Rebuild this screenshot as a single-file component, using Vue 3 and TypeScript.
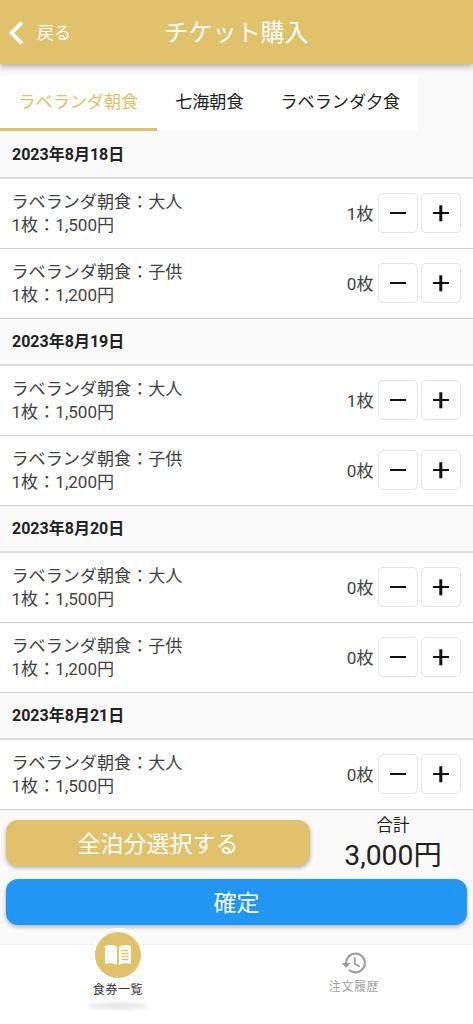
<script setup lang="ts">
interface Item { name: string; price: string; count: number }
interface Day { date: string; items: Item[] }
const adult = (count: number): Item => ({ name: 'ラベランダ朝食：大人', price: '1枚：1,500円', count })
const child = (count: number): Item => ({ name: 'ラベランダ朝食：子供', price: '1枚：1,200円', count })
const days: Day[] = [
  { date: '2023年8月18日', items: [adult(1), child(0)] },
  { date: '2023年8月19日', items: [adult(1), child(0)] },
  { date: '2023年8月20日', items: [adult(0), child(0)] },
  { date: '2023年8月21日', items: [adult(0)] },
]
const tabs = ['ラベランダ朝食', '七海朝食', 'ラベランダ夕食']
</script>

<template>
  <div class="page">
    <header class="header">
      <div class="back">
        <svg class="chev" width="16" height="24" viewBox="0 0 16 24"><path d="M14 1.500 3.500 12 14 22.500" fill="none" stroke="#fff" stroke-width="3.800" /></svg>
        <span>戻る</span>
      </div>
      <h1 class="title">チケット購入</h1>
    </header>
    <nav class="tabs">
      <div v-for="(t, i) in tabs" :key="t" class="tab" :class="{ active: i === 0 }">{{ t }}</div>
    </nav>
    <main class="list">
      <section v-for="d in days" :key="d.date">
        <div class="date">{{ d.date }}</div>
        <div v-for="it in d.items" :key="it.name" class="row">
          <div class="info">
            <div>{{ it.name }}</div>
            <div>{{ it.price }}</div>
          </div>
          <span class="count">{{ it.count }}枚</span>
          <button class="step"><span class="bar"></span></button>
          <button class="step"><span class="bar"></span><span class="bar v"></span></button>
        </div>
      </section>
    </main>
    <div class="footer">
      <div class="top">
        <button class="all">全泊分選択する</button>
        <div class="total">
          <div class="tl">合計</div>
          <div class="tv">3,000円</div>
        </div>
      </div>
      <button class="confirm">確定</button>
    </div>
    <footer class="nav">
      <div class="nav-item on">
        <div class="circle">
          <svg width="28" height="24" viewBox="0 0 28 24">
            <path fill="#fff" d="M1 3c4-1.500 8.500-1.500 12 .8V22c-3.500-2-8-2.300-12-1.200zM15 3.800C18.500 1.500 23 1.500 27 3v17.800c-4-1.100-8.500-.8-12 1.200z" />
            <path stroke="#e0c16c" stroke-width="1.500" fill="none" d="M17.500 7.500h7M17.500 10.500h7M17.500 13.500h7M17.500 16.500h7" />
          </svg>
        </div>
        <span class="label">食券一覧</span>
        <div class="shadow"></div>
      </div>
      <div class="nav-item off">
        <svg class="hist" width="26" height="24" viewBox="0 0 26 24">
          <path fill="#9e9e9e" d="M14.500 1.500a10.500 10.500 0 0 0-10.500 10.500H.5l4.600 4.700L9.700 12H6.200a8.300 8.300 0 1 1 2.500 5.900l-1.600 1.600A10.500 10.500 0 1 0 14.500 1.500z" />
          <path fill="none" stroke="#9e9e9e" stroke-width="1.900" d="M13.700 6.500V12.800l5 3" />
        </svg>
        <span class="label">注文履歴</span>
      </div>
    </footer>
  </div>
</template>

<style scoped>
.page {
  width: 473px;
  height: 1024px;
  display: flex;
  flex-direction: column;
  overflow: hidden;
  background: #fafafa;
  color: #212121;
  font-family: Roboto, "Noto Sans CJK JP", sans-serif;
}
.header {
  flex: none;
  height: 64px;
  background: #e0c16c;
  display: flex;
  align-items: center;
  justify-content: center;
  position: relative;
  color: #fff;
  box-shadow: 0 3px 6px rgba(0, 0, 0, .3);
  z-index: 2;
}
.back {
  position: absolute;
  left: 8px;
  top: 21px;
  display: flex;
  align-items: center;
  gap: 13px;
  font-size: 17px;
  line-height: 24px;
}
.title {
  margin: 0;
  padding-top: 2px;
  font-size: 24px;
  font-weight: 400;
  line-height: 62px;
}
.tabs {
  flex: none;
  margin-top: 12px;
  width: 418px;
  height: 54.500px;
  display: flex;
  background: #fff;
}
.tab {
  padding: 0 18.500px;
  font-size: 17.100px;
  line-height: 52px;
  white-space: nowrap;
}
.tab.active {
  color: #e0c16c;
  border-bottom: 3px solid #e0c16c;
}
.list {
  flex: 1;
  min-height: 0;
  overflow: hidden;
  padding-top: 1px;
}
.date {
  height: 47px;
  padding: 0 12px;
  box-sizing: border-box;
  font-size: 16px;
  font-weight: 700;
  line-height: 45px;
  border-bottom: 2px solid #ddd;
}
.row {
  height: 70px;
  box-sizing: border-box;
  background: #fff;
  border-bottom: 1.500px solid #d0d0d0;
  display: flex;
  align-items: center;
  padding: 0 12px 0 11.500px;
  font-size: 17.100px;
  color: #424242;
}
.info {
  flex: 1;
  padding-top: 1.500px;
  line-height: 23px;
}
.count {
  margin-right: .500px;
  margin-bottom: 2px;
}
.step {
  width: 40px;
  height: 40px;
  padding: 0;
  box-sizing: border-box;
  background: #fff;
  border: 1px solid #e6e6e6;
  border-radius: 5px;
  position: relative;
  margin-left: 3.500px;
}
.bar {
  position: absolute;
  left: 11px;
  top: 17.500px;
  width: 16px;
  height: 2.600px;
  background: #111;
}
.bar.v {
  transform: rotate(90deg);
}
.footer {
  flex: none;
  height: 134px;
  box-sizing: border-box;
  padding: 10px 6px 0;
}
.top {
  display: flex;
  align-items: flex-start;
  height: 46px;
}
.all {
  width: 304px;
  height: 46px;
  padding: 0 0 3px;
  border: 0;
  border-radius: 12px;
  background: #e0c16c;
  color: #fff;
  font: inherit;
  font-size: 23px;
  box-shadow: 0 2px 4px rgba(0, 0, 0, .3);
}
.total {
  flex: 1;
  text-align: center;
  margin-top: -5px;
  margin-left: 9px;
}
.tl {
  font-size: 16.500px;
  line-height: 22px;
}
.tv {
  font-size: 28.300px;
  line-height: 38px;
}
.confirm {
  display: block;
  width: 461px;
  height: 46px;
  margin-top: 12.500px;
  padding: 0 0 2px;
  border: 0;
  border-radius: 12px;
  background: #2196f3;
  color: #fff;
  font: inherit;
  font-size: 23px;
  box-shadow: 0 2px 4px rgba(0, 0, 0, .3);
}
.nav {
  flex: none;
  height: 80px;
  background: #fff;
  display: flex;
  border-top: 1px solid #f2f2f2;
  box-sizing: border-box;
  position: relative;
}
.nav-item {
  width: 236px;
  display: flex;
  flex-direction: column;
  align-items: center;
  position: relative;
}
.on {
  padding-top: 38px;
}
.circle {
  position: absolute;
  top: -13px;
  width: 46px;
  height: 46px;
  border-radius: 50%;
  background: #e0c16c;
  box-shadow: 0 0 0 4px #fff;
  display: flex;
  align-items: center;
  justify-content: center;
}
.label {
  font-size: 12px;
  line-height: 14px;
  letter-spacing: .6px;
}
.on .label {
  color: #333;
}
.off {
  padding-top: 6px;
}
.off .label {
  color: #a6a6a6;
  margin-top: 5px;
}
.hist {
  display: block;
}
.shadow {
  width: 60px;
  height: 6px;
  margin-top: 6px;
  border-radius: 50%;
  background: #e4e4e4;
  filter: blur(2px);
}
</style>

<style>
html, body { margin: 0; background: #fafafa; }
</style>
